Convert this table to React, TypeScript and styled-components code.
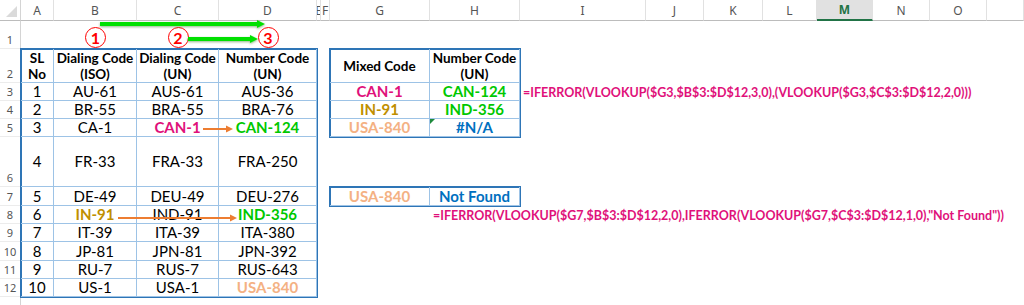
import React from "react";
import styled, { createGlobalStyle } from "styled-components";

// sheet geometry, px (row header column first, header row first)
const COLS = [21, 33, 83, 82, 98, 4, 9, 100, 90, 126, 58, 59, 54, 56, 57, 57, 37];
const LETTERS = ["A", "B", "C", "D", "E", "F", "G", "H", "I", "J", "K", "L", "M", "N", "O", ""];
const ROWS = [21, 28, 34, 18, 18, 18, 50, 19, 18, 18, 19, 18, 18, 30];

const PINK = "#e0117a";
const GREEN = "#00c800";
const GOLD = "#bf8f00";
const PEACH = "#f4b183";
const BLUE = "#0070c0";

const px = (a: number[]) => a.map((n) => n + "px").join(" ");

const GlobalStyle = createGlobalStyle`
  html, body {
    margin: 0;
    padding: 0;
    background: #fff;
  }
  body {
    font-family: Lato, "Open Sans", sans-serif;
    color: #000;
  }
`;

const Sheet = styled.div`
  position: relative;
  display: grid;
  grid-template-columns: ${px(COLS)};
  grid-template-rows: ${px(ROWS)};
  width: 1024px;
  height: 305px;
  overflow: hidden;
  background: #fff;
`;

const Corner = styled.div`
  grid-column: 1;
  grid-row: 1;
  position: relative;
  border-right: 1px solid #d4d4d4;
  border-bottom: 1px solid #bcbcbc;
  &::after {
    content: "";
    position: absolute;
    right: 3px;
    bottom: 3px;
    width: 0;
    height: 0;
    border-left: 11px solid transparent;
    border-bottom: 11px solid #dadada;
  }
`;

const ColHead = styled.div<{ $col: number; $active?: boolean }>`
  grid-column: ${(p) => p.$col};
  grid-row: 1;
  display: flex;
  align-items: center;
  justify-content: center;
  overflow: hidden;
  font-family: "Noto Sans", "Open Sans", sans-serif;
  font-size: 12px;
  color: ${(p) => (p.$active ? "#217346" : "#555")};
  font-weight: ${(p) => (p.$active ? 700 : 400)};
  background: ${(p) => (p.$active ? "#e1e1e1" : "#fff")};
  border-right: 1px solid #e1e1e1;
  border-bottom: ${(p) => (p.$active ? "2px solid #217346" : "1px solid #bcbcbc")};
  box-sizing: border-box;
`;

const RowHead = styled.div<{ $row: number }>`
  grid-column: 1;
  grid-row: ${(p) => p.$row};
  display: flex;
  align-items: flex-end;
  justify-content: center;
  padding-bottom: 1px;
  box-sizing: border-box;
  font-family: "Noto Sans", "Open Sans", sans-serif;
  font-size: 11px;
  line-height: 15px;
  color: #555;
  border-right: 1px solid #d4d4d4;
  border-bottom: 1px solid #ececec;
`;

const MarkerCell = styled.div<{ $col: number }>`
  grid-column: ${(p) => p.$col};
  grid-row: 2;
  display: flex;
  align-items: flex-end;
  justify-content: center;
  padding-bottom: 1px;
`;

const Marker = styled.span`
  display: inline-flex;
  align-items: center;
  justify-content: center;
  width: 19px;
  height: 19px;
  border: 1.5px solid #f00;
  border-radius: 50%;
  color: #f00;
  font-family: Lato, sans-serif;
  font-weight: 700;
  font-size: 16px;
  line-height: 1;
  background: #fff;
  position: relative;
  z-index: 2;
`;

const Table = styled.div<{ $col: string; $row: string; $cols: number[]; $rows: number[] }>`
  grid-column: ${(p) => p.$col};
  grid-row: ${(p) => p.$row};
  display: grid;
  grid-template-columns: ${(p) => px(p.$cols)};
  grid-template-rows: ${(p) => px(p.$rows)};
  outline: 2px solid #2e75b6;
  outline-offset: -1px;
`;

const Cell = styled.div<{ $color?: string; $bold?: boolean; $head?: boolean; $flag?: boolean }>`
  position: relative;
  display: flex;
  align-items: center;
  justify-content: center;
  text-align: center;
  border-right: 1px solid #9dc3e6;
  border-bottom: 1px solid #9dc3e6;
  font-size: ${(p) => (p.$head ? "13.5px" : "15px")};
  line-height: ${(p) => (p.$head ? "16px" : "17px")};
  font-weight: ${(p) => (p.$bold || p.$head ? 700 : 400)};
  color: ${(p) => p.$color || "#000"};
  white-space: nowrap;
  &::before {
    content: "";
    display: ${(p) => (p.$flag ? "block" : "none")};
    position: absolute;
    left: 0;
    top: 0;
    border-top: 5px solid #1e8a3c;
    border-right: 5px solid transparent;
  }
`;

const Formula = styled.div<{ $col: number; $row: number }>`
  grid-column: ${(p) => p.$col};
  grid-row: ${(p) => p.$row};
  display: flex;
  align-items: center;
  padding-left: 3px;
  white-space: nowrap;
  overflow: visible;
  font-size: 12.5px;
  font-weight: 700;
  color: ${PINK};
  position: relative;
  z-index: 1;
`;

const Overlay = styled.svg`
  position: absolute;
  left: 0;
  top: 0;
  pointer-events: none;
  z-index: 3;
`;

type Row = [string, string, string, string];
const DATA: { cells: Row; colors?: (string | undefined)[] }[] = [
  { cells: ["1", "AU-61", "AUS-61", "AUS-36"] },
  { cells: ["2", "BR-55", "BRA-55", "BRA-76"] },
  { cells: ["3", "CA-1", "CAN-1", "CAN-124"], colors: [, , PINK, GREEN] },
  { cells: ["4", "FR-33", "FRA-33", "FRA-250"] },
  { cells: ["5", "DE-49", "DEU-49", "DEU-276"] },
  { cells: ["6", "IN-91", "IND-91", "IND-356"], colors: [, GOLD, , GREEN] },
  { cells: ["7", "IT-39", "ITA-39", "ITA-380"] },
  { cells: ["8", "JP-81", "JPN-81", "JPN-392"] },
  { cells: ["9", "RU-7", "RUS-7", "RUS-643"] },
  { cells: ["10", "US-1", "USA-1", "USA-840"], colors: [, , , PEACH] },
];

function GreenArrow({ x1, x2, y }: { x1: number; x2: number; y: number }) {
  return (
    <g filter="url(#glow)">
      <line x1={x1} y1={y} x2={x2 - 6} y2={y} stroke="#00e000" strokeWidth={4} />
      <polygon points={`${x2 - 8},${y - 4} ${x2},${y} ${x2 - 8},${y + 4}`} fill="#00e000" />
    </g>
  );
}

function OrangeArrow({ x1, x2, y }: { x1: number; x2: number; y: number }) {
  return (
    <g>
      <line x1={x1} y1={y} x2={x2 - 5} y2={y} stroke="#ed7d31" strokeWidth={2} />
      <polygon points={`${x2 - 7},${y - 3.5} ${x2},${y} ${x2 - 7},${y + 3.5}`} fill="#ed7d31" />
    </g>
  );
}

export default function App() {
  const rowNums = Array.from({ length: 13 }, (_, i) => i + 1);

  return (
    <>
      <GlobalStyle />
      <Sheet>
        <Corner />
        {LETTERS.map((l, i) => (
          <ColHead key={i} $col={i + 2} $active={l === "M"}>
            {l}
          </ColHead>
        ))}
        {rowNums.map((n) => (
          <RowHead key={n} $row={n + 1}>
            {n < 13 ? n : null}
          </RowHead>
        ))}

        <MarkerCell $col={3}><Marker>1</Marker></MarkerCell>
        <MarkerCell $col={4}><Marker>2</Marker></MarkerCell>
        <MarkerCell $col={5}><Marker>3</Marker></MarkerCell>

        {/* main lookup table, A2:D12 */}
        <Table $col="2 / 6" $row="3 / 14" $cols={COLS.slice(1, 5)} $rows={ROWS.slice(2, 13)}>
          <Cell $head>SL<br />No</Cell>
          <Cell $head>Dialing Code<br />(ISO)</Cell>
          <Cell $head>Dialing Code<br />(UN)</Cell>
          <Cell $head>Number Code<br />(UN)</Cell>
          {DATA.map((r, i) =>
            r.cells.map((c, j) => (
              <Cell key={i + "-" + j} $color={r.colors?.[j]} $bold={!!r.colors?.[j]}>
                {c}
              </Cell>
            ))
          )}
        </Table>

        {/* G2:H5 */}
        <Table $col="8 / 10" $row="3 / 7" $cols={COLS.slice(7, 9)} $rows={ROWS.slice(2, 6)}>
          <Cell $head>Mixed Code</Cell>
          <Cell $head>Number Code<br />(UN)</Cell>
          <Cell $bold $color={PINK}>CAN-1</Cell>
          <Cell $bold $color={GREEN}>CAN-124</Cell>
          <Cell $bold $color={GOLD}>IN-91</Cell>
          <Cell $bold $color={GREEN}>IND-356</Cell>
          <Cell $bold $color={PEACH}>USA-840</Cell>
          <Cell $bold $color={BLUE} $flag>#N/A</Cell>
        </Table>

        {/* G7:H7 */}
        <Table $col="8 / 10" $row="8 / 9" $cols={COLS.slice(7, 9)} $rows={ROWS.slice(7, 8)}>
          <Cell $bold $color={PEACH}>USA-840</Cell>
          <Cell $bold $color={BLUE}>Not Found</Cell>
        </Table>

        <Formula $col={10} $row={4}>
          =IFERROR(VLOOKUP($G3,$B$3:$D$12,3,0),(VLOOKUP($G3,$C$3:$D$12,2,0)))
        </Formula>
        <Formula $col={9} $row={9}>
          =IFERROR(VLOOKUP($G7,$B$3:$D$12,2,0),IFERROR(VLOOKUP($G7,$C$3:$D$12,1,0),"Not Found"))
        </Formula>

        <Overlay width={1024} height={305} viewBox="0 0 1024 305">
          <defs>
            <filter id="glow" x="-10%" y="-200%" width="120%" height="500%">
              <feDropShadow dx="0" dy="1" stdDeviation="1.2" floodColor="#3a7a2a" floodOpacity="0.55" />
            </filter>
          </defs>
          <GreenArrow x1={100} x2={265} y={24} />
          <GreenArrow x1={188} x2={258} y={39} />
          <OrangeArrow x1={203} x2={233} y={129} />
          <OrangeArrow x1={118} x2={237} y={218} />
        </Overlay>
      </Sheet>
    </>
  );
}
